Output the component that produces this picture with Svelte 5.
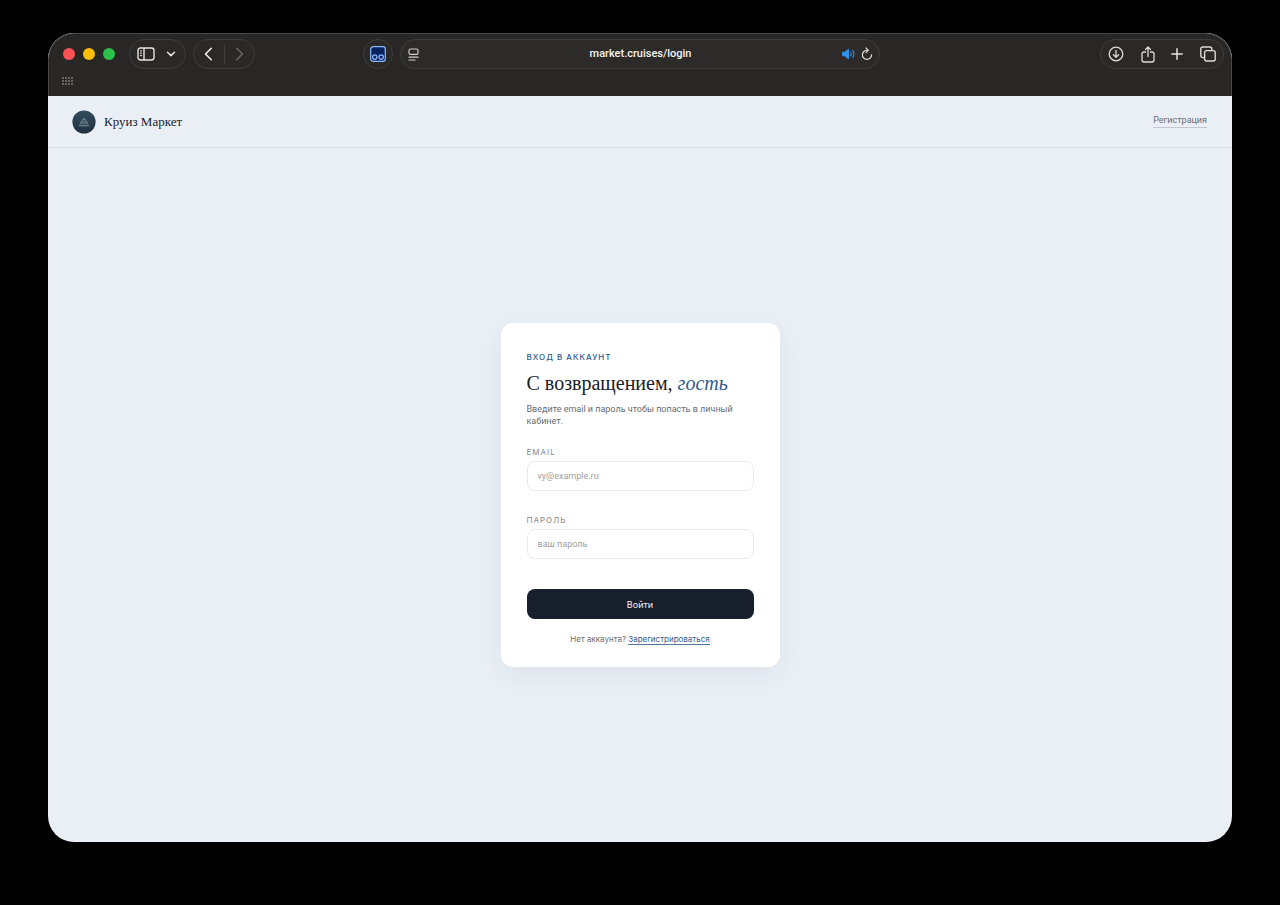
<script>
  let email = $state('');
  let password = $state('');
  const lights = ['#ff5257', '#ffbf09', '#2bc149'];
  const dots = [0, 1, 2, 3].flatMap((x) => [0, 1, 2].map((y) => ({ x: x * 3 + 1, y: y * 3 + 1 })));
</script>

<div class="desktop">
  <div class="window">
    <div class="chrome">
      <div class="toolbar">
        <div class="side">
          <div class="lights">
            {#each lights as color}
              <span class="light" style="background: {color}"></span>
            {/each}
          </div>
          <div class="pill sidebar">
            <button aria-label="Sidebar">
              <svg width="18" height="14" viewBox="0 0 18 14" fill="none" stroke="#e6e5e4" stroke-width="1.4">
                <rect x="1" y="1" width="16" height="12" rx="2.4" />
                <path d="M7 1v12" />
                <path d="M3 4h2M3 6.3h2M3 8.6h2" stroke-width="1" />
              </svg>
            </button>
            <button aria-label="Tab groups">
              <svg width="10" height="6" viewBox="0 0 10 6" fill="none" stroke="#e6e5e4" stroke-width="1.5" stroke-linecap="round" stroke-linejoin="round">
                <path d="M1.5 1.2 5 4.6l3.5-3.4" />
              </svg>
            </button>
          </div>
          <div class="pill history">
            <button aria-label="Back">
              <svg width="9" height="14" viewBox="0 0 9 14" fill="none" stroke="#f0efee" stroke-width="1.6" stroke-linecap="round" stroke-linejoin="round">
                <path d="M7.3 1.3 1.5 7l5.8 5.7" />
              </svg>
            </button>
            <span class="divider"></span>
            <button aria-label="Forward">
              <svg width="9" height="14" viewBox="0 0 9 14" fill="none" stroke="#6b6967" stroke-width="1.5" stroke-linecap="round" stroke-linejoin="round">
                <path d="M1.7 1.3 7.5 7l-5.8 5.7" />
              </svg>
            </button>
          </div>
          <div class="pill extension">
            <button aria-label="Extension">
              <svg width="16" height="16" viewBox="0 0 16 16" fill="none" stroke="#8db9ff">
                <rect x="0.7" y="0.7" width="14.6" height="14.6" rx="2.6" fill="#06225c" stroke-width="1.2" />
                <circle cx="4.8" cy="11.1" r="2.2" stroke-width="1.2" />
                <circle cx="11.2" cy="11.1" r="2.2" stroke-width="1.2" />
              </svg>
            </button>
          </div>
        </div>

        <div class="pill address">
          <button aria-label="Page menu">
            <svg width="11" height="13" viewBox="0 0 11 13" fill="none" stroke="#cfcdcb" stroke-width="1.2" stroke-linecap="round">
              <rect x="1" y="1" width="9" height="5.4" rx="1.4" />
              <path d="M1 9.2h9M1 12h6" />
            </svg>
          </button>
          <span class="url">market.cruises/login</span>
          <div class="status">
            <button aria-label="Mute">
              <svg width="14" height="12" viewBox="0 0 14 12" fill="none" stroke="#2f96ee" stroke-linecap="round">
                <path d="M1 4.2h2L6.4 1.2v9.6L3 7.8H1z" fill="#2f96ee" stroke-width="1" stroke-linejoin="round" />
                <path d="M8.8 4.2q1.2 1.8 0 3.6M10.8 2.6q2.3 3.4 0 6.8" stroke-width="1.1" />
              </svg>
            </button>
            <button aria-label="Reload">
              <svg width="12" height="14" viewBox="0 0 12 14" fill="none" stroke="#dddbd9" stroke-width="1.2" stroke-linecap="round" stroke-linejoin="round">
                <path d="M6.6 3.3A4.6 4.6 0 1 0 10.6 7.8" />
                <path d="M5 1l2.3 2.3L5 5.7" />
              </svg>
            </button>
          </div>
        </div>

        <div class="side end">
          <div class="pill actions">
            <button aria-label="Downloads">
              <svg width="16" height="16" viewBox="0 0 16 16" fill="none" stroke="#dddbd9" stroke-width="1.3" stroke-linecap="round" stroke-linejoin="round">
                <circle cx="8" cy="8" r="6.8" />
                <path d="M8 4.5v6.6M5.4 8.7 8 11.3l2.6-2.6" />
              </svg>
            </button>
            <button aria-label="Share">
              <svg width="14" height="17" viewBox="0 0 14 17" fill="none" stroke="#dddbd9" stroke-width="1.3" stroke-linecap="round" stroke-linejoin="round">
                <path d="M4.6 6H3a2 2 0 0 0-2 2v6a2 2 0 0 0 2 2h8a2 2 0 0 0 2-2V8a2 2 0 0 0-2-2H9.4" />
                <path d="M7 10.5V1.2M4.5 3.5 7 1l2.5 2.5" />
              </svg>
            </button>
            <button aria-label="New tab">
              <svg width="12" height="12" viewBox="0 0 12 12" fill="none" stroke="#e6e5e4" stroke-width="1.5" stroke-linecap="round">
                <path d="M6 .8v10.4M.8 6h10.4" />
              </svg>
            </button>
            <button aria-label="Tab overview">
              <svg width="16" height="16" viewBox="0 0 16 16" fill="none" stroke="#dddbd9" stroke-width="1.4" stroke-linejoin="round">
                <rect x="4.6" y="4.6" width="10.6" height="10.4" rx="2" />
                <path d="M4.6 11.6H2.8a2 2 0 0 1-2-2V3a2 2 0 0 1 2-2h7a2 2 0 0 1 2 2v1.6" />
              </svg>
            </button>
          </div>
        </div>
      </div>
      <div class="favourites">
        <button aria-label="Favourites">
          <svg width="11" height="8" viewBox="0 0 11 8" fill="#b3b1af">
            {#each dots as d}
              <circle cx={d.x} cy={d.y} r="0.8" />
            {/each}
          </svg>
        </button>
      </div>
    </div>

    <header>
      <a class="brand" href="/">
        <svg width="24" height="24" viewBox="0 0 24 24" fill="none">
          <defs>
            <linearGradient id="seal" x1="0" y1="0" x2="0" y2="1">
              <stop offset="0" stop-color="#314c5c" />
              <stop offset="1" stop-color="#21303f" />
            </linearGradient>
          </defs>
          <circle cx="12" cy="12" r="11.6" fill="url(#seal)" />
          <g stroke="#8fa3ae" stroke-width=".8" stroke-linecap="round">
            <path d="M12 8v1M10.6 9.8h2.8M9.2 12h5.6M7 15.8h10" />
            <path d="M10.4 9.8 8.2 13.6M13.6 9.8l2.2 3.8" stroke-width=".5" />
            <path d="M8.3 13.8h7.4" stroke-width=".6" />
          </g>
        </svg>
        <span>Круиз Маркет</span>
      </a>
      <a class="register" href="/register">Регистрация</a>
    </header>

    <main>
      <form class="card" onsubmit={(e) => e.preventDefault()}>
        <p class="eyebrow">Вход в аккаунт</p>
        <h1>С возвращением, <em>гость</em></h1>
        <p class="lead">Введите email и пароль чтобы попасть в личный кабинет.</p>
        <div class="field">
          <label for="email">Email</label>
          <input id="email" type="email" placeholder="vy@example.ru" bind:value={email} />
        </div>
        <div class="field">
          <label for="password">Пароль</label>
          <input id="password" type="password" placeholder="ваш пароль" bind:value={password} />
        </div>
        <button class="submit" type="submit">Войти</button>
        <p class="foot">Нет аккаунта? <a href="/register">Зарегистрироваться</a></p>
      </form>
    </main>
  </div>
</div>

<style>
  :global(body) {
    margin: 0;
    background: #000;
  }
  * {
    box-sizing: border-box;
  }
  .desktop {
    display: flex;
    min-height: 100vh;
    padding: 33px 48px 63px;
    background: #000;
    font-family: Inter, 'Liberation Sans', sans-serif;
  }
  .window {
    flex: 1;
    display: flex;
    flex-direction: column;
    border-radius: 26px;
    overflow: hidden;
    background: #eaeff6;
  }
  button {
    display: flex;
    align-items: center;
    justify-content: center;
    padding: 0;
    border: 0;
    background: none;
    font: inherit;
  }
  svg {
    display: block;
  }
  .chrome {
    height: 63px;
    padding: 5px 7px 0;
    border: 1px solid #4a4846;
    border-bottom: 0;
    border-radius: 26px 26px 0 0;
    background: #292725;
  }
  .toolbar {
    display: grid;
    grid-template-columns: 1fr 480px 1fr;
    gap: 7px;
    align-items: center;
  }
  .side {
    display: flex;
    align-items: center;
    gap: 7px;
  }
  .end {
    justify-content: flex-end;
  }
  .lights {
    display: flex;
    gap: 8px;
    padding: 0 7px;
  }
  .light {
    width: 12px;
    height: 12px;
    border-radius: 50%;
  }
  .pill {
    display: flex;
    align-items: center;
    height: 30px;
    border: 1px solid #403e3c;
    border-radius: 15px;
    background: #2b2927;
  }
  .sidebar {
    gap: 11px;
    width: 57px;
    padding: 0 7px;
  }
  .history {
    justify-content: space-between;
    width: 62px;
    padding: 0 10px;
  }
  .divider {
    width: 1px;
    height: 19px;
    background: #403e3c;
  }
  .extension {
    justify-content: center;
    width: 30px;
    margin-left: auto;
  }
  .address {
    display: grid;
    grid-template-columns: 1fr auto 1fr;
    padding: 0 6px 0 7px;
    background: #2d2b29;
  }
  .address > button {
    justify-self: start;
  }
  .url {
    color: #f4f3f2;
    font-family: Roboto, sans-serif;
    font-size: 11px;
    font-weight: 500;
    line-height: 16px;
  }
  .status {
    display: flex;
    justify-content: flex-end;
    gap: 5px;
  }
  .actions {
    justify-content: space-between;
    width: 124px;
    padding: 0 7px;
  }
  .favourites {
    padding: 8px 6px;
  }
  header {
    display: flex;
    align-items: center;
    justify-content: space-between;
    height: 52px;
    padding: 0 25px 0 24px;
    border-bottom: 1px solid #d9dee6;
  }
  .brand {
    display: flex;
    align-items: center;
    gap: 8px;
    color: #1c232e;
    font-family: 'Liberation Serif', serif;
    font-size: 13px;
    text-decoration: none;
  }
  .register {
    border-bottom: 1px solid #c3c8d0;
    color: #6a7079;
    font-family: Roboto, sans-serif;
    font-size: 9px;
    line-height: 13px;
    margin-bottom: 2px;
    text-decoration: none;
  }
  main {
    flex: 1;
    display: flex;
    align-items: center;
    justify-content: center;
  }
  .card {
    width: 279px;
    padding: 28px 26px 22px;
    border-radius: 12px;
    background: #fff;
    box-shadow: 0 8px 24px rgba(40, 45, 55, 0.06);
  }
  p,
  h1 {
    margin: 0;
  }
  .eyebrow {
    color: #2f5788;
    font-size: 8px;
    font-weight: 500;
    letter-spacing: 1px;
    line-height: 12px;
    text-transform: uppercase;
  }
  h1 {
    margin: 6px 0;
    color: #1a202b;
    font-family: 'Liberation Serif', serif;
    font-size: 20px;
    font-weight: 400;
    line-height: 28px;
    white-space: nowrap;
  }
  em {
    color: #315a8e;
  }
  .lead {
    margin-bottom: 20px;
    color: #696d73;
    font-family: Roboto, sans-serif;
    font-size: 9px;
    line-height: 12px;
  }
  .field {
    margin-bottom: 24px;
  }
  label {
    display: block;
    margin-bottom: 4px;
    color: #85888d;
    font-size: 8px;
    letter-spacing: 1px;
    line-height: 10px;
    text-transform: uppercase;
  }
  input {
    display: block;
    width: 100%;
    height: 30px;
    padding: 0 10px;
    border: 1px solid #e9eaec;
    border-radius: 8px;
    background: #fff;
    color: #1a202b;
    font-family: Roboto, sans-serif;
    font-size: 9px;
  }
  input::placeholder {
    color: #9c9fa3;
    opacity: 1;
  }
  .submit {
    width: 100%;
    height: 30px;
    margin-top: 30px;
    border-radius: 8px;
    background: #181f2c;
    color: #f3f4f6;
    font-size: 9px;
  }
  .foot {
    margin-top: 14px;
    color: #696d73;
    font-size: 8px;
    line-height: 12px;
    text-align: center;
  }
  .foot a {
    border-bottom: 1px solid #4f76a8;
    color: #315a8e;
    text-decoration: none;
  }
</style>
